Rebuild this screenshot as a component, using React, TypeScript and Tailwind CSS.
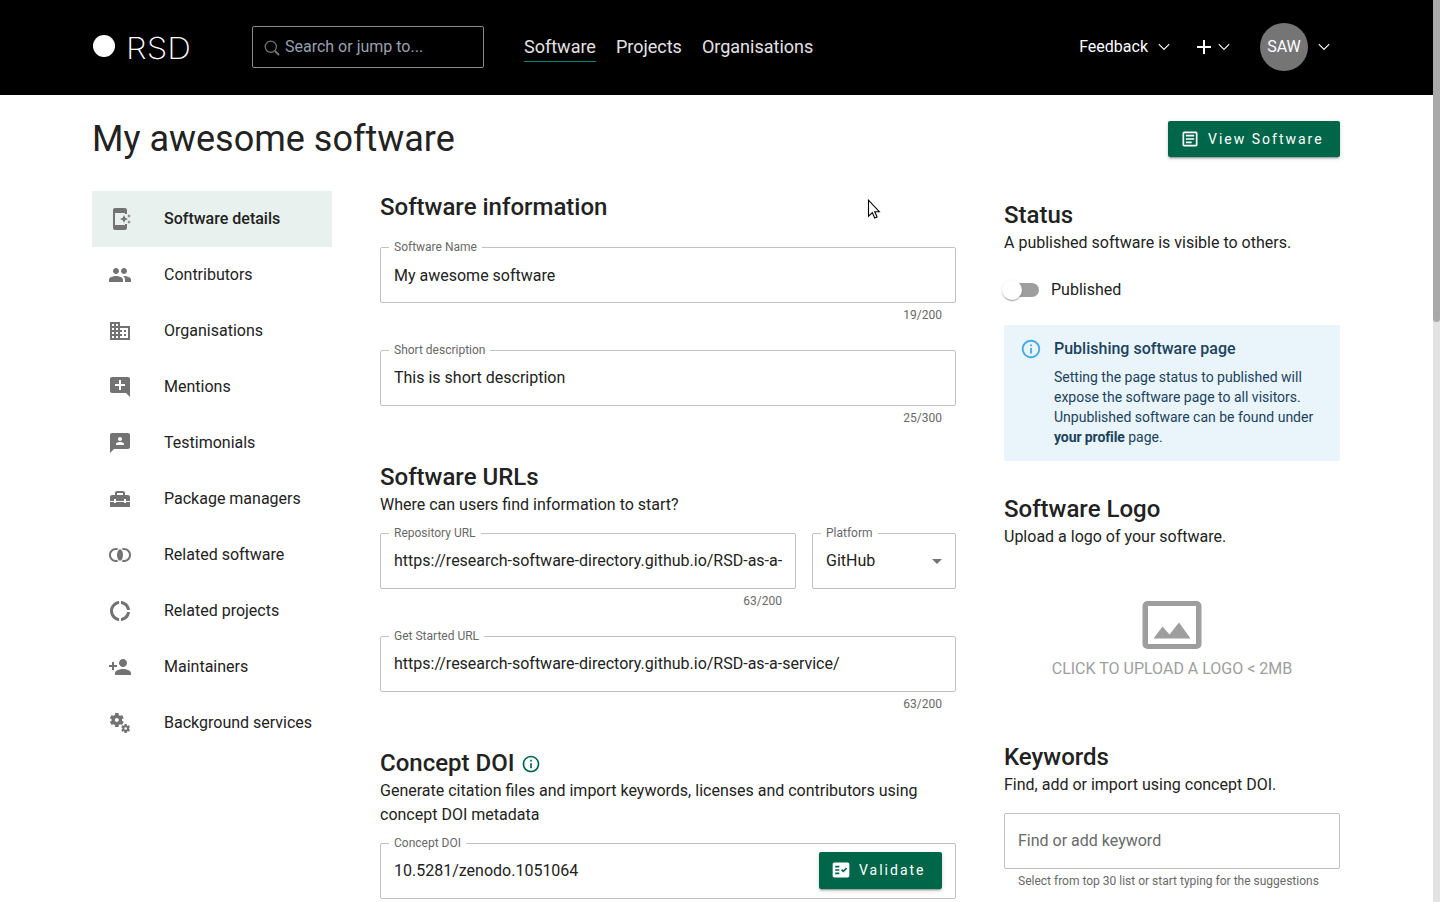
import type { ReactNode } from 'react'
import type { IconType } from 'react-icons'
import {
  Md3P,
  MdAdd,
  MdAddComment,
  MdAppShortcut,
  MdArrowDropDown,
  MdDomain,
  MdDonutLarge,
  MdFactCheck,
  MdHomeRepairService,
  MdInfoOutline,
  MdJoinInner,
  MdMiscellaneousServices,
  MdOutlineArticle,
  MdPeople,
  MdPersonAdd,
} from 'react-icons/md'

const navItems: { label: string; icon: IconType }[] = [
  { label: 'Software details', icon: MdAppShortcut },
  { label: 'Contributors', icon: MdPeople },
  { label: 'Organisations', icon: MdDomain },
  { label: 'Mentions', icon: MdAddComment },
  { label: 'Testimonials', icon: Md3P },
  { label: 'Package managers', icon: MdHomeRepairService },
  { label: 'Related software', icon: MdJoinInner },
  { label: 'Related projects', icon: MdDonutLarge },
  { label: 'Maintainers', icon: MdPersonAdd },
  { label: 'Background services', icon: MdMiscellaneousServices },
]

function Chevron() {
  return (
    <svg viewBox="0 0 12 8" className="h-2 w-3" fill="none" stroke="currentColor" strokeWidth="1.1">
      <path d="M0.8 1.2 6 6.4 11.2 1.2" />
    </svg>
  )
}

function Header() {
  return (
    <header className="h-[95px] bg-black text-white">
      <div className="ml-[92px] flex h-[94px] w-[1248px] items-center">
        <div className="flex w-40 items-center">
          <span className="mb-0.5 ml-px size-[22px] rounded-full bg-white" />
          <span className="mt-px ml-[11px] origin-left scale-x-110 font-['Inter'] text-[30px] leading-8 font-extralight tracking-[0.1px]">RSD</span>
        </div>
        <div className="flex h-[42px] w-[232px] items-center rounded-xs border border-[#8b8b8b] pl-[11px]">
          <svg viewBox="0 0 16 16" className="mt-0.5 size-4" fill="none" stroke="#787878">
            <circle cx="6.8" cy="6.8" r="5.6" strokeWidth="1.2" />
            <path d="M11 11l4 4" strokeWidth="1.8" />
          </svg>
          <span className="ml-[5px] text-base text-[#99a1af]">Search or jump to...</span>
        </div>
        <nav className="ml-10 flex gap-5 text-lg text-[#e3e3e3]">
          <span className="border-b border-[#00857a] pt-px">Software</span>
          <span className="border-b border-transparent pt-px">Projects</span>
          <span className="border-b border-transparent pt-px">Organisations</span>
        </nav>
        <div className="ml-auto flex items-center">
          <span className="mr-[10px]">Feedback</span>
          <Chevron />
          <MdAdd className="ml-[22px] size-6" />
          <span className="ml-[2px]"><Chevron /></span>
          <span className="ml-[30px] flex size-12 items-center justify-center rounded-full bg-[#757575]">SAW</span>
          <span className="mr-[10px] ml-[10px]"><Chevron /></span>
        </div>
      </div>
    </header>
  )
}

function SideNav() {
  return (
    <nav className="w-60">
      {navItems.map(({ label, icon: Icon }, i) => (
        <div key={label} className={i === 0 ? 'flex h-14 items-center bg-[#e8f1ee] px-4 font-medium' : 'flex h-14 items-center px-4'}>
          <Icon className="mr-8 size-6 text-[#737373]" />
          {label}
        </div>
      ))}
    </nav>
  )
}

function Field({ label, value, count, className = '', valueClass = '', children }: { label: string; value: string; count?: string; className?: string; valueClass?: string; children?: ReactNode }) {
  return (
    <div className={className}>
      <div className="relative flex h-14 items-center rounded-xs border border-[#c2c2c2] px-[13px]">
        <span className="absolute -top-[11px] left-[8px] bg-white px-[5px] text-xs leading-5 text-[#696969]">{label}</span>
        <span className={`flex-1 whitespace-nowrap ${valueClass}`}>{value}</span>
        {children}
      </div>
      {count && <p className="mt-0.5 pr-3.5 pb-px text-right text-xs leading-5 text-[#696969]">{count}</p>}
    </div>
  )
}

function SectionTitle({ children }: { children: ReactNode }) {
  return <h2 className="flex items-center text-2xl font-medium">{children}</h2>
}

function Button({ icon, className, children }: { icon: ReactNode; className: string; children: ReactNode }) {
  return (
    <button className={`flex items-center rounded-xs bg-[#006649] text-sm tracking-[2px] text-white shadow-[0_3px_1px_-2px_rgba(0,0,0,0.2),0_2px_2px_0_rgba(0,0,0,0.14),0_1px_5px_0_rgba(0,0,0,0.12)] ${className}`}>
      {icon}
      {children}
    </button>
  )
}

function MainForm() {
  return (
    <section className="w-[576px]">
      <SectionTitle>Software information</SectionTitle>
      <Field className="mt-6" label="Software Name" value="My awesome software" valueClass="pt-0.5" count="19/200" />
      <Field className="mt-6" label="Short description" value="This is short description" count="25/300" />
      <div className="mt-8">
        <SectionTitle>Software URLs</SectionTitle>
        <p>Where can users find information to start?</p>
      </div>
      <div className="mt-4 flex gap-4">
        <Field className="w-[416px]" label="Repository URL" value="https://research-software-directory.github.io/RSD-as-a-" count="63/200" />
        <Field className="w-36" label="Platform" value="GitHub">
          <MdArrowDropDown className="-mr-[7px] size-6 text-[#757575]" />
        </Field>
      </div>
      <Field className="mt-6" label="Get Started URL" value="https://research-software-directory.github.io/RSD-as-a-service/" count="63/200" />
      <div className="mt-8">
        <SectionTitle>
          Concept DOI
          <MdInfoOutline className="mt-0.5 ml-[7px] size-5 text-[#006649]" />
        </SectionTitle>
        <p>Generate citation files and import keywords, licenses and contributors using concept DOI metadata</p>
      </div>
      <Field className="mt-4" label="Concept DOI" value="10.5281/zenodo.1051064">
        <Button className="mb-px h-[37px] w-[123px] pb-px pl-3" icon={<MdFactCheck className="mr-2 size-5" />}>Validate</Button>
      </Field>
    </section>
  )
}

function Aside() {
  return (
    <aside className="w-[336px] pt-2">
      <SectionTitle>Status</SectionTitle>
      <p>A published software is visible to others.</p>
      <div className="mt-[23px] flex h-6 items-center">
        <span className="flex h-3.5 w-[35px] items-center rounded-full bg-[#9e9e9e]">
          <span className="-ml-0.5 size-5 rounded-full bg-white shadow-[0_2px_1px_-1px_rgba(0,0,0,0.2),0_1px_1px_0_rgba(0,0,0,0.14),0_1px_3px_0_rgba(0,0,0,0.12)]" />
        </span>
        <span className="ml-3">Published</span>
      </div>
      <div className="mt-[23px] flex h-[136px] rounded-xs bg-[#e9f4fb] px-4 pt-3 text-[#1b435d]">
        <MdInfoOutline className="mt-px mr-3 size-[22px] shrink-0 text-[#47a9e5]" />
        <div>
          <p className="font-medium">Publishing software page</p>
          <p className="mt-1.5 w-[264px] text-sm">
            Setting the page status to published will expose the software page to all visitors. Unpublished software can be found under{' '}
            <strong className="tracking-[-0.1px]">your profile</strong> page.
          </p>
        </div>
      </div>
      <div className="mt-8">
        <SectionTitle>Software Logo</SectionTitle>
        <p>Upload a logo of your software.</p>
      </div>
      <div className="mt-[52px] flex flex-col items-center text-[#9e9e9e]">
        <svg viewBox="0 0 60 48" className="h-12 w-[60px]" fill="currentColor">
          <path fillRule="evenodd" d="M5.5 0h49a5 5 0 0 1 5 5v38a5 5 0 0 1-5 5h-49a5 5 0 0 1-5-5V5a5 5 0 0 1 5-5zM6 5v38h48V5z" />
          <path d="M11.5 37.5 20.5 25.5 27.5 33.5 37 21.5 48.5 37.5z" />
        </svg>
        <p className="mt-2">CLICK TO UPLOAD A LOGO &lt; 2MB</p>
      </div>
      <div className="mt-[60px]">
        <SectionTitle>Keywords</SectionTitle>
        <p>Find, add or import using concept DOI.</p>
      </div>
      <div className="mt-4 flex h-14 items-center rounded-xs border border-[#c2c2c2] px-[13px] text-[#696969]">Find or add keyword</div>
      <p className="mt-0.5 px-3.5 text-xs leading-5 text-[#696969]">Select from top 30 list or start typing for the suggestions</p>
    </aside>
  )
}

export default function App() {
  return (
    <div className="relative flex h-[902px] w-[1440px] overflow-hidden bg-white font-['Roboto',sans-serif] text-base text-[#222222]">
      <div className="w-[1433px]">
        <Header />
        <div className="ml-[92px] w-[1248px]">
          <div className="flex h-24 items-start justify-between">
            <h1 className="mt-6 text-4xl leading-10">My awesome software</h1>
            <Button className="mt-[26px] h-9 w-[172px] pl-3" icon={<MdOutlineArticle className="mr-2 size-5" />}>View Software</Button>
          </div>
          <main className="flex gap-12">
            <SideNav />
            <MainForm />
            <Aside />
          </main>
        </div>
      </div>
      <div className="w-[7px] bg-[#e3e3e3]">
        <div className="h-[322px] rounded-b-sm bg-[#a9a9a9]" />
      </div>
      <svg viewBox="0 0 14 21" className="absolute top-[199px] left-[867px] h-[21px] w-3.5" fill="white" stroke="black" strokeWidth="1.1">
        <path d="M1.5 1.2v16l3.8-3.6 2.4 5.4 2.4-1.1-2.4-5.2h4.6z" />
      </svg>
    </div>
  )
}
